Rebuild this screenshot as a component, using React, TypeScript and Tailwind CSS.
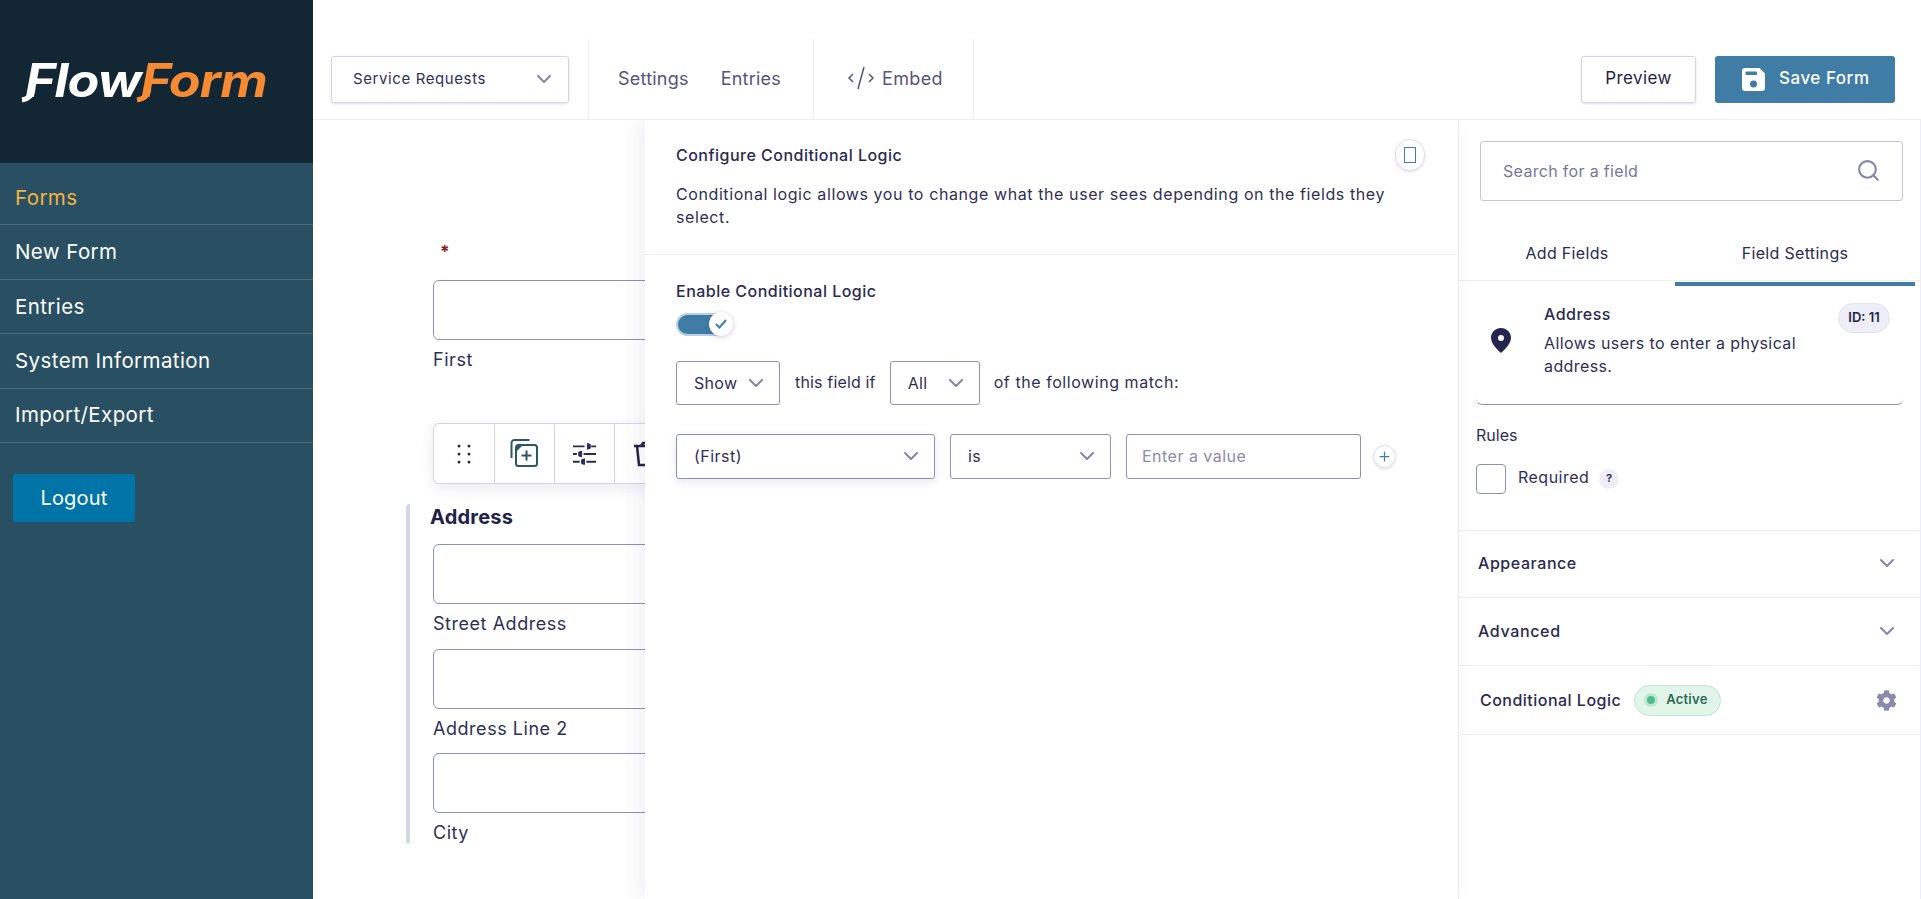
import { ChevronDown, Search, Plus } from "lucide-react";
import { FaCog } from "react-icons/fa";

const navItems = ["Forms", "New Form", "Entries", "System Information", "Import/Export"];

function Chevron({ className }: { className?: string }) {
  return <ChevronDown className={className} size={24} strokeWidth={2} />;
}

function TextBox() {
  return <div className="h-[60px] w-[500px] rounded-md border border-[#8f8fb5] bg-white" />;
}

function Sidebar() {
  return (
    <aside className="w-[313px] shrink-0 bg-[#285062]">
      <div className="relative flex h-[163px] items-center bg-[#132633] pb-[3px] pl-[25px]">
        <span className="origin-left scale-x-[1.13] text-[46px] leading-none font-bold italic tracking-[-0.02em] text-white">
          Flow<span className="text-[#f68b33]">Form</span>
        </span>
        {/* tails under the two F's */}
        <svg className="absolute top-[59px] left-[20px]" width="250" height="44" viewBox="0 0 250 44" fill="none" strokeWidth="5">
          <path d="M13 30c-1 6-4 10-11 11" stroke="#fff" />
          <path d="M129 30c-1 6-4 10-12 11" stroke="#f68b33" />
        </svg>
      </div>
      <nav className="pt-[8px]">
        {navItems.map((item, i) => (
          <div
            key={item}
            className={`flex h-[54.4px] items-center border-b border-[#4b6a7b] pt-[1px] pl-[15px] text-[20.5px] tracking-[0.02em] ${
              i === 0 ? "text-[#f8b040]" : "text-white"
            }`}
          >
            {item}
          </div>
        ))}
      </nav>
      <button className="mt-[31px] ml-[13px] h-[48px] w-[122px] rounded-[3px] bg-[#0074a6] text-[20px] tracking-[0.01em] text-white">
        Logout
      </button>
    </aside>
  );
}

function Header() {
  return (
    <header className="flex h-[120px] shrink-0 border-b border-[#ededf7] pt-[39px] text-[#55557a]">
      <div className="flex h-[80px] w-[276px] items-center border-r border-[#ededf7] pl-[18px]">
        <div className="flex h-[47px] w-[238px] items-center justify-between rounded-[3px] border border-[#d5d5ea] pr-[12px] pl-[21px] text-[15px] font-normal tracking-[0.04em] text-[#30305a] shadow-sm">
          Service Requests
          <Chevron className="text-[#8585a8]" />
        </div>
      </div>
      <div className="flex h-[80px] w-[225px] items-center gap-[32px] border-r border-[#ededf7] pb-[2px] pl-[29px] text-[18px] tracking-[0.012em]">
        <span>Settings</span>
        <span>Entries</span>
      </div>
      <div className="flex h-[80px] w-[160px] items-center gap-[8px] border-r border-[#ededf7] pb-[2px] pl-[34px] text-[18px] tracking-[0.02em]">
        <svg width="26" height="24" viewBox="0 0 26 24" fill="none" stroke="#55557a" strokeWidth="1.5">
          <path d="M5 8l-4 4 4 4" />
          <path d="M16 1l-6 22" />
          <path d="M21 8l4 4-4 4" />
        </svg>
        <span>Embed</span>
      </div>
      <div className="ml-auto flex h-[80px] items-center gap-[19px] pr-[26px]">
        <button className="h-[47px] w-[115px] rounded-[3px] border border-[#d5d5ea] text-[17px] font-normal tracking-[0.025em] text-[#1f1f47] shadow-sm">
          Preview
        </button>
        <button className="flex h-[47px] w-[180px] items-center gap-[14px] rounded-[3px] bg-[#3f7ca6] pl-[27px] text-[17px] font-medium tracking-[0.03em] text-white">
          <svg width="23" height="23" viewBox="0 0 23 23">
            <path
              fillRule="evenodd"
              fill="#fff"
              d="M3 0h14.500L23 5.500V20a3 3 0 0 1-3 3H3a3 3 0 0 1-3-3V3a3 3 0 0 1 3-3zM4.500 3.500a1 1 0 0 0-1 1v1.500a1 1 0 0 0 1 1H14a1 1 0 0 0 1-1V4.500a1 1 0 0 0-1-1zM11.500 12.500a3.500 3.500 0 1 0 0 7 3.500 3.500 0 0 0 0-7z"
            />
          </svg>
          Save Form
        </button>
      </div>
    </header>
  );
}

function Toolbar() {
  return (
    <div className="mt-[51px] flex h-[61px] w-[300px] rounded-md border border-[#d5d5ea] bg-white shadow-[0_4px_14px_rgba(60,60,110,0.1)]">
      <div className="flex w-[61px] items-center justify-center border-r border-[#d5d5ea]">
        <svg width="14" height="20" viewBox="0 0 14 20" fill="#2a2a55">
          <circle cx="2" cy="2" r="1.500" />
          <circle cx="12" cy="2" r="1.500" />
          <circle cx="2" cy="10" r="1.500" />
          <circle cx="12" cy="10" r="1.500" />
          <circle cx="2" cy="18" r="1.500" />
          <circle cx="12" cy="18" r="1.500" />
        </svg>
      </div>
      <div className="flex w-[60px] items-center justify-center border-r border-[#d5d5ea] pr-[2px] pb-[2px]">
        <svg width="28" height="28" viewBox="0 0 28 28" fill="none" stroke="#2c5568" strokeWidth="2">
          <path d="M1.500 19V4a3 3 0 0 1 3-3h15" />
          <rect x="6" y="6" width="21" height="21" rx="2.500" />
          <path d="M6 6h7l-7 7z" fill="#2c5568" stroke="none" />
          <path d="M16.500 11.500v10M11.500 16.500h10" />
        </svg>
      </div>
      <div className="flex w-[60px] items-center justify-center border-r border-[#d5d5ea]">
        <svg width="23" height="22" viewBox="0 0 24 22" fill="#2a2a55" stroke="#2a2a55" strokeWidth="2">
          <path d="M0 3h12M19 3h5" />
          <path d="M15 0v6l3-1V1z" strokeWidth="1" />
          <path d="M0 11h4M11 11h13" />
          <path d="M9 8v6l-3-1V9z" strokeWidth="1" />
          <path d="M0 19h7M14 19h10" />
          <path d="M12 16v6l-3-1v-4z" strokeWidth="1" />
        </svg>
      </div>
      <div className="flex w-[60px] items-center justify-center">
        <svg width="24" height="26" viewBox="0 0 24 26" fill="none" stroke="#23234a" strokeWidth="2.500">
          <path d="M1 5h22M4 5l2 19h12l2-19M8 5l2-3h4l2 3" />
        </svg>
      </div>
    </div>
  );
}

function FormArea() {
  return (
    <div className="flex-1 overflow-hidden pt-[118px] pl-[120px] text-[18px] tracking-[0.03em] text-[#2f2f55]">
      <div className="flex h-[42px] items-start pt-[2px] pl-[7px] text-[17px] font-bold text-[#8b1a1a]">*</div>
      <TextBox />
      <div className="mt-[8px] h-[24px] leading-[24px]">First</div>
      <Toolbar />
      <section className="mt-[20px] -ml-[27px] h-[339px] overflow-hidden rounded-tl-sm border-l-4 border-[#d3d5e9] pl-[23px]">
        <h2 className="-ml-[3px] h-[26px] text-[20px] leading-[26px] font-bold tracking-[0.01em] text-[#20204a]">Address</h2>
        <div className="mt-[14px]">
          <TextBox />
          <div className="mt-[8px] h-[24px] leading-[24px]">Street Address</div>
        </div>
        <div className="mt-[13px]">
          <TextBox />
          <div className="mt-[8px] h-[24px] leading-[24px]">Address Line 2</div>
        </div>
        <div className="mt-[12px]">
          <TextBox />
          <div className="mt-[8px] h-[24px] leading-[24px]">City</div>
        </div>
      </section>
    </div>
  );
}

function LogicPanel() {
  return (
    <div className="absolute top-0 right-[463px] bottom-0 w-[813px] bg-white text-[16px] tracking-[0.03em] text-[#2f2f55] shadow-[-6px_0_20px_rgba(70,70,130,0.08)]">
      <div className="relative h-[135px] border-b border-[#ededf7] pt-[23px] pl-[31px]">
        <h3 className="h-[24px] leading-[24px] font-medium text-[#2a2a50]">Configure Conditional Logic</h3>
        <p className="mt-[16px] w-[740px] leading-[23px] tracking-[0.037em]">
          Conditional logic allows you to change what the user sees depending on the fields they select.
        </p>
        <button className="absolute top-[19px] right-[33px] flex h-[32px] w-[30px] items-center justify-center rounded-full border border-[#dcdcee] shadow-sm">
          <span className="h-[16px] w-[12px] border border-[#3f7ca6]" />
        </button>
      </div>
      <div className="pt-[24px] pl-[31px]">
        <div className="h-[24px] leading-[24px] font-medium text-[#2a2a50]">Enable Conditional Logic</div>
        <div className="relative mt-[10px] h-[23px] w-[56px] rounded-full border-2 border-[#b9d0e3] bg-[#3f7ca6]">
          <span className="absolute top-[-3px] right-[-3px] flex h-[24px] w-[24px] items-center justify-center rounded-full bg-white shadow-[0_1px_5px_rgba(60,60,110,0.25)]">
            <svg width="12" height="10" viewBox="0 0 12 10" fill="none" stroke="#3f7ca6" strokeWidth="2">
              <path d="M1 5l3.500 3.500L11 1" />
            </svg>
          </span>
        </div>
        <div className="mt-[25px] flex items-center">
          <div className="flex h-[44px] w-[104px] items-center justify-between rounded-[3px] border border-[#8f8fb5] pr-[11px] pl-[17px] tracking-[0.02em]">
            Show
            <Chevron className="text-[#8585a8]" />
          </div>
          <span className="mr-[14px] ml-[15px] pb-[2px] tracking-[0.01em]">this field if</span>
          <div className="flex h-[44px] w-[90px] items-center justify-between rounded-[3px] border border-[#8f8fb5] pr-[11px] pl-[17px] tracking-[0.02em]">
            All
            <Chevron className="text-[#8585a8]" />
          </div>
          <span className="ml-[14px] pb-[2px] tracking-[0.035em]">of the following match:</span>
        </div>
        <div className="mt-[29px] flex items-center gap-[15px]">
          <div className="flex h-[45px] w-[259px] items-center justify-between rounded-[3px] border border-[#8f8fb5] pr-[11px] pb-[1px] pl-[17px] shadow-[0_3px_8px_rgba(70,70,130,0.12)]">
            (First)
            <Chevron className="text-[#8585a8]" />
          </div>
          <div className="flex h-[45px] w-[161px] items-center justify-between rounded-[3px] border border-[#8f8fb5] pr-[11px] pb-[1px] pl-[17px]">
            is
            <Chevron className="text-[#8585a8]" />
          </div>
          <div className="flex h-[45px] w-[235px] items-center rounded-[3px] border border-[#8f8fb5] pb-[1px] pl-[15px] text-[#8b8bab]">
            Enter a value
          </div>
          <button className="-ml-[3px] flex h-[23px] w-[23px] items-center justify-center rounded-full border border-[#dcdcee] text-[#3f7ca6] shadow-sm">
            <Plus size={15} strokeWidth={2} />
          </button>
        </div>
      </div>
    </div>
  );
}

function FieldPanel() {
  return (
    <div className="w-[463px] shrink-0 border-x border-[#ededf7] bg-white text-[16px] tracking-[0.03em] text-[#2f2f55]">
      <div className="mt-[21px] ml-[21px] flex h-[60px] w-[423px] items-center justify-between rounded-[3px] border border-[#c6c6dc] pr-[21px] pb-[1px] pl-[22px] tracking-[0.02em] text-[#77779a]">
        Search for a field
        <Search size={25} strokeWidth={2} className="text-[#8585a8]" />
      </div>
      <div className="flex h-[80px] border-b border-[#ededf7] tracking-[0.02em] text-[#2b2b52]">
        <div className="flex w-[216px] items-end justify-center pb-[15px]">Add Fields</div>
        <div className="flex w-[240px] items-end justify-center pb-[15px]">Field Settings</div>
      </div>
      <div className="flex h-[5px] justify-end pr-[5px]">
        <div className="mt-[1px] h-[4px] w-[240px] bg-[#3f7ca6]" />
      </div>
      <div className="ml-[17px] flex h-[119px] w-[427px] items-start rounded-b-md border-b border-[#8f8fb5] pt-[15px]">
        <svg width="20" height="25" viewBox="0 0 20 25" className="mt-[27px] ml-[15px] shrink-0">
          <path
            fillRule="evenodd"
            fill="#25264f"
            d="M10 0c5.500 0 10 4.300 10 9.800 0 5.500-5 10.700-10 15.200C5 20.500 0 15.300 0 9.800 0 4.300 4.500 0 10 0zm0 7a3 3 0 1 0 0 6 3 3 0 0 0 0-6z"
          />
        </svg>
        <div className="ml-[33px] w-[295px]">
          <div className="h-[24px] pt-[1px] leading-[24px] font-medium text-[#2a2a50]">Address</div>
          <p className="mt-[7px] leading-[23px] tracking-[0.025em]">Allows users to enter a physical address.</p>
        </div>
        <span className="mt-[2px] -ml-[1px] flex h-[30px] w-[52px] items-center justify-center rounded-full border border-[#e2e2f2] bg-[#eeeef8] text-[13px] font-semibold tracking-normal text-[#23234a]">
          ID: 11
        </span>
      </div>
      <div className="h-[125px] pt-[18px] pl-[17px]">
        <div className="h-[24px] leading-[24px] tracking-normal">Rules</div>
        <div className="mt-[17px] flex items-center">
          <span className="h-[30px] w-[30px] rounded-[4px] border border-[#8f8fb5]" />
          <span className="ml-[12px] pb-[5px]">Required</span>
          <span className="ml-[10px] flex h-[20px] w-[20px] items-center justify-center rounded-full bg-[#eeeef8] pb-[1px] text-[11px] font-bold text-[#30305a]">
            ?
          </span>
        </div>
      </div>
      <div className="flex h-[67px] items-center justify-between border-t border-[#ededf7] pr-[21px] pb-[2px] pl-[19px] font-medium tracking-[0.035em] text-[#2a2a50]">
        Appearance
        <Chevron className="text-[#8585a8]" />
      </div>
      <div className="flex h-[68px] items-center justify-between border-t border-[#ededf7] pr-[21px] pb-[2px] pl-[19px] font-medium tracking-[0.04em] text-[#2a2a50]">
        Advanced
        <Chevron className="text-[#8585a8]" />
      </div>
      <div className="flex h-[70px] items-center border-y border-[#ededf7] pr-[23px] pl-[21px] font-medium text-[#2a2a50]">
        Conditional Logic
        <span className="ml-[13px] flex h-[31px] w-[87px] items-center gap-[8px] rounded-full border border-[#bde8d2] bg-[#e2f5ea] pl-[9px] text-[13px] font-semibold tracking-[0.02em] text-[#2b6b52]">
          <span className="flex h-[14px] w-[14px] items-center justify-center rounded-full bg-[#bfe8d3]">
            <span className="h-[8px] w-[8px] rounded-full bg-[#4fbb8a]" />
          </span>
          Active
        </span>
        <FaCog size={21} className="ml-auto text-[#8a8aac]" />
      </div>
    </div>
  );
}

export default function App() {
  return (
    <div className="flex h-screen w-full overflow-hidden bg-white font-['Inter',sans-serif]">
      <Sidebar />
      <main className="flex min-w-0 flex-1 flex-col">
        <Header />
        <div className="relative flex flex-1 overflow-hidden">
          <FormArea />
          <LogicPanel />
          <FieldPanel />
        </div>
      </main>
    </div>
  );
}
